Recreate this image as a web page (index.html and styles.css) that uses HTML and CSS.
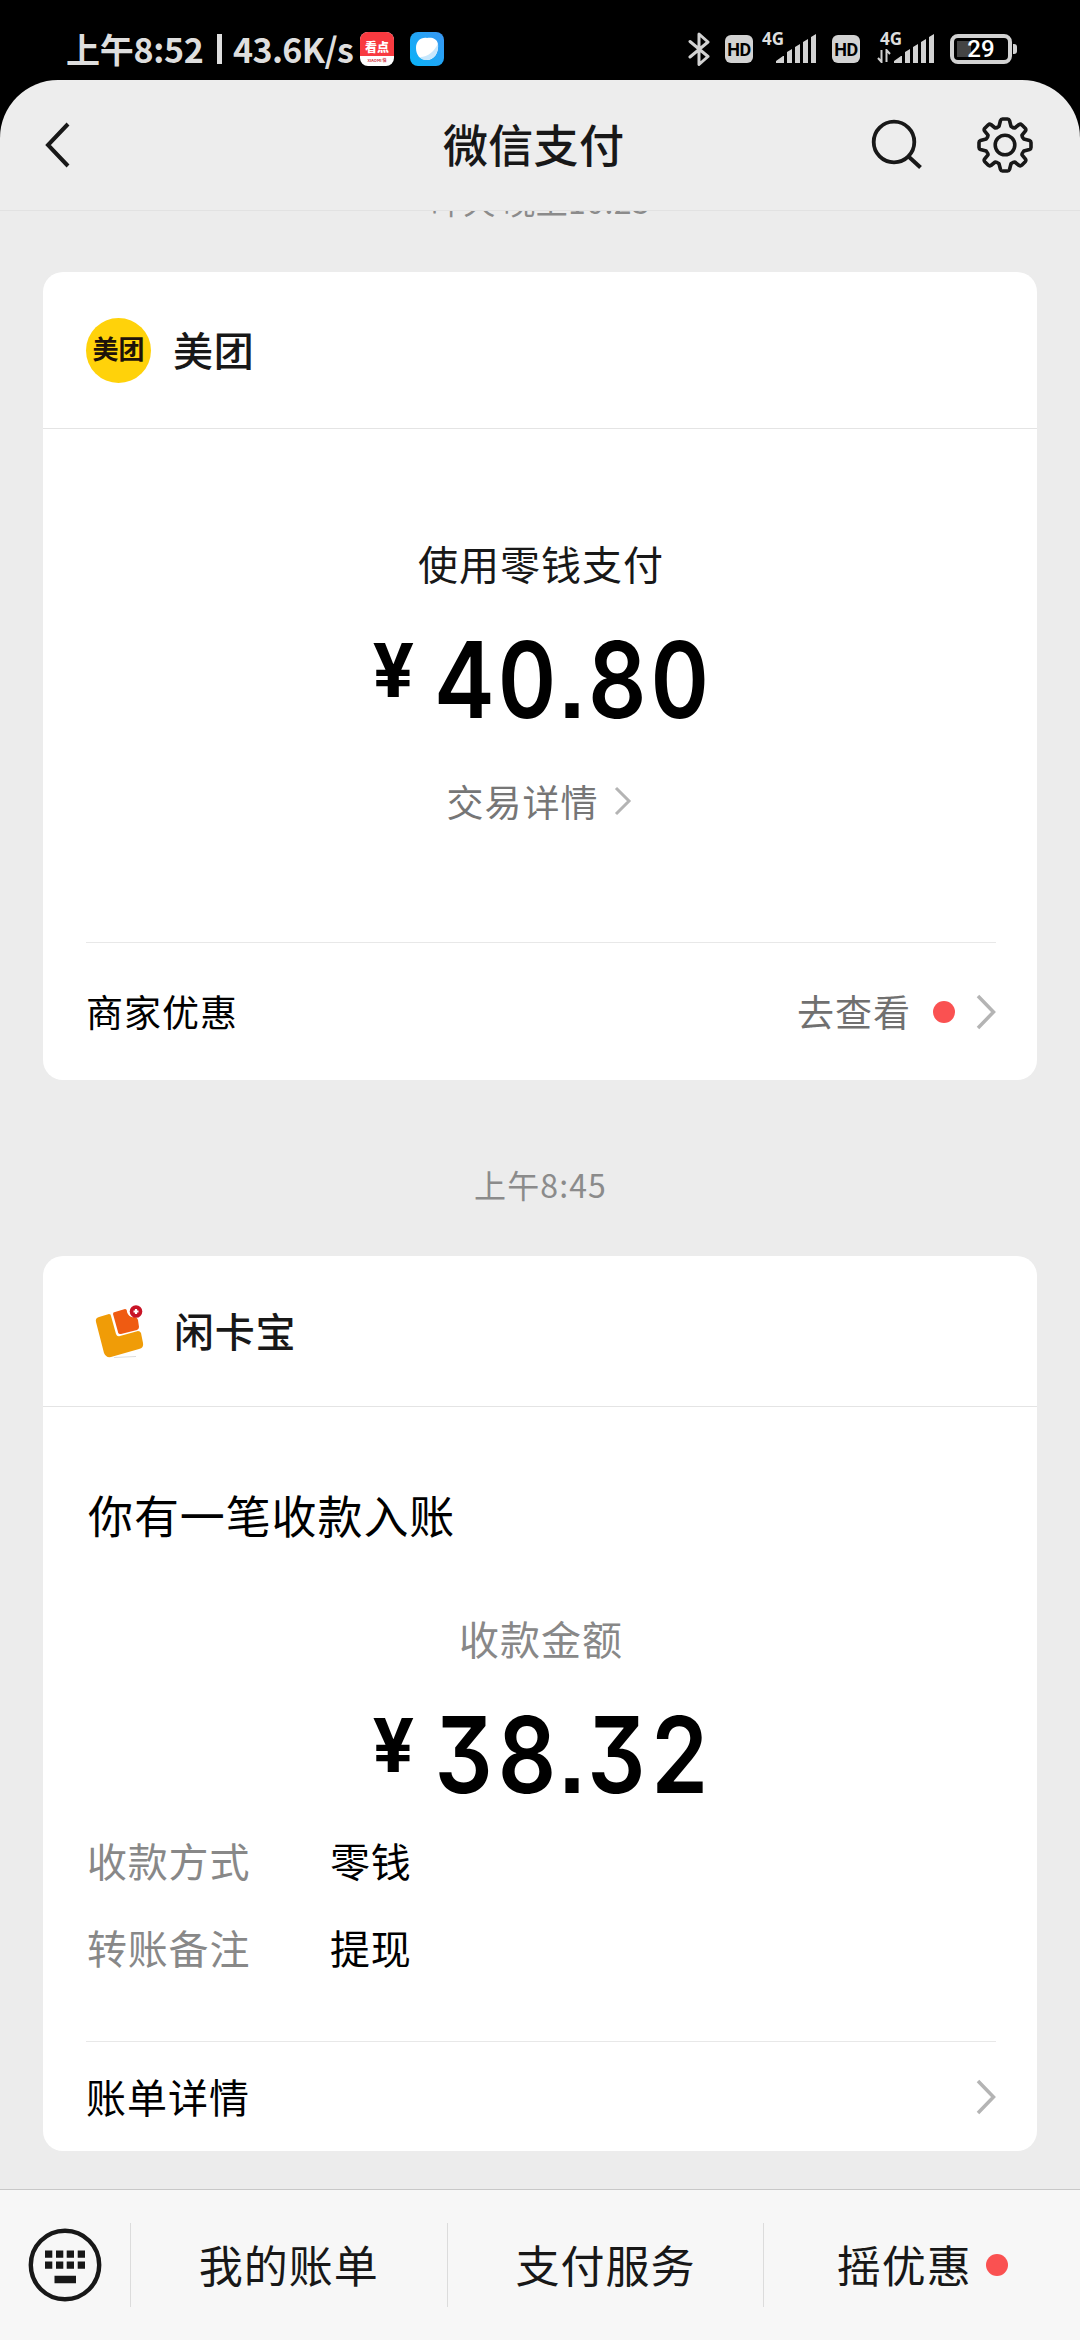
FILE: index.html
```html
<!DOCTYPE html>
<html lang="zh-CN">
<head>
<meta charset="utf-8">
<title>微信支付</title>
<link rel="stylesheet" href="styles.css">
</head>
<body>
<div class="status">
  <span class="clock">上午8:52</span><span class="rule"></span><span class="speed">43.6K/s</span>
  <span class="app-red"><b>看点</b><i>XIAOMI 快</i></span>
  <svg class="app-blue" viewBox="0 0 34 34"><defs><linearGradient id="sky" x1="0" x2="1" y1="1" y2="0"><stop offset="0" stop-color="#08b4f8"/><stop offset="1" stop-color="#3a96f2"/></linearGradient></defs><rect width="34" height="34" rx="8" fill="url(#sky)"/><path d="M6 16C6 9 11 5 17 6c4-1 10 0 11 6 1 9-4 16-11 16S6 23 6 16z" fill="#fff"/><path d="M28 11c1 10-4 17-12 17-3 0-5-1-6-3 8 0 15-6 18-14z" fill="#c8e7fc"/></svg>
  <span class="grow"></span>
  <svg class="bt" viewBox="0 0 22 34"><path d="M2 9.500l18 15-9 8V2l9 8L2 25" fill="none" stroke="#d2d2d2" stroke-width="3" stroke-linejoin="round" stroke-linecap="round"/></svg>
  <span class="hd">HD</span>
  <span class="net"><em>4G</em><svg viewBox="0 0 40 29"><path d="M0 29v-2l7-5h1v7zM11 29V18l5-3v14zM19 29V13l5-3v19zM27 29V8l5-3v24zM35 29V3l5-3v29z" fill="#d2d2d2"/></svg></span>
  <span class="hd hd2">HD</span>
  <span class="net net2"><em>4G</em><svg class="updown" viewBox="0 0 14 14"><path d="M4.500 1v12L1 9M9.500 13V1l3.500 4" fill="none" stroke="#d2d2d2" stroke-width="2"/></svg><svg viewBox="0 0 40 29"><path d="M0 29v-2l7-5h1v7zM11 29V18l5-3v14zM19 29V13l5-3v19zM27 29V8l5-3v24zM35 29V3l5-3v29z" fill="#d2d2d2"/></svg></span>
  <span class="battery">29</span><span class="nub"></span>
</div>
<header class="nav">
  <svg class="back" viewBox="0 0 28 48"><path d="M24 3L4 24l20 21" fill="none" stroke="#181818" stroke-width="4"/></svg>
  <h1>微信支付</h1>
  <svg class="search" viewBox="0 0 54 54"><circle cx="24" cy="24" r="20.300" fill="none" stroke="#181818" stroke-width="3.800"/><path d="M38.500 38.500L50.500 49.500" stroke="#181818" stroke-width="4"/></svg>
  <svg class="gear" viewBox="-29 -29 58 58"><g fill="none" stroke="#181818" stroke-width="3.600" stroke-linejoin="round"><circle r="9.800"/><path d="M-4.500-24.500Q-4-26 -2.500-26H2.500Q4-26 4.500-24.500L6-18.800Q9-16.500 9.800-17L14.100-20.500Q15.500-21.300 16.700-20.200L20.200-16.700Q21.300-15.500 20.500-14.100L17-9.800Q16.500-9 18.800-6L24.500-4.500Q26-4 26-2.500V2.500Q26 4 24.500 4.500L18.800 6Q16.500 9 17 9.800L20.500 14.100Q21.300 15.500 20.200 16.700L16.700 20.200Q15.500 21.300 14.100 20.500L9.800 17Q9 16.500 6 18.800L4.500 24.500Q4 26 2.500 26H-2.500Q-4 26-4.500 24.500L-6 18.800Q-9 16.500-9.800 17L-14.100 20.500Q-15.500 21.300-16.700 20.200L-20.200 16.700Q-21.300 15.500-20.500 14.100L-17 9.800Q-16.500 9-18.800 6L-24.500 4.500Q-26 4-26 2.500V-2.500Q-26-4-24.500-4.500L-18.800-6Q-16.500-9-17-9.800L-20.500-14.100Q-21.300-15.500-20.200-16.700L-16.700-20.200Q-15.500-21.300-14.100-20.500L-9.800-17Q-9-16.500-6-18.800Z"/></g></svg>
</header>
<main class="chat">
  <p class="time time-cut">昨天 晚上10:23</p>
  <section class="card card-pay">
    <div class="card-head"><span class="meituan">美团</span><h2>美团</h2></div>
    <div class="card-body">
      <p class="caption">使用零钱支付</p>
      <p class="amount"><span class="yen">¥</span><span class="num">40.80</span></p>
      <p class="link">交易详情<svg viewBox="0 0 18 30"><path d="M2 2l13 13L2 28" fill="none" stroke="#b4b4b4" stroke-width="3"/></svg></p>
    </div>
    <div class="card-foot"><span>商家优惠</span><span class="grow"></span><span class="go">去查看</span><i class="dot"></i><svg class="chev" viewBox="0 0 20 36"><path d="M2 2l15.500 16L2 34" fill="none" stroke="#b4b4b4" stroke-width="3.500"/></svg></div>
  </section>
  <p class="time">上午8:45</p>
  <section class="card card-in">
    <div class="card-head"><svg class="wallet" viewBox="0 0 50 54"><path d="M2 18q-1-4 3-5l10-3q2 0 2 2l5 18q1 3 4 2l18-5q2 0 3 2l2 10q1 5-4 6l-28 8q-5 1-7-4z" fill="#f09c07"/><path d="M19 10q0-2 2-2l10-3q2 0 2 3 2 6 7 5 3 0 4 3l1 7q0 2-2 3l-16 4q-3 0-3-2z" fill="#ef5b12"/><circle cx="42" cy="7.500" r="6.300" fill="#c81426"/><path d="M42 5v5M39.500 7.500h5" stroke="#fff" stroke-width="2.200"/><path d="M20 53.500l22-1" stroke="#ddd"/></svg><h2>闲卡宝</h2></div>
    <h3>你有一笔收款入账</h3>
    <p class="caption muted">收款金额</p>
    <p class="amount"><span class="yen">¥</span><span class="num">38.32</span></p>
    <dl><dt>收款方式</dt><dd>零钱</dd><dt>转账备注</dt><dd>提现</dd></dl>
    <div class="card-foot"><span>账单详情</span><span class="grow"></span><svg class="chev" viewBox="0 0 20 36"><path d="M2 2l15.500 16L2 34" fill="none" stroke="#b4b4b4" stroke-width="3.500"/></svg></div>
  </section>
</main>
<footer class="menu">
  <div class="keys"><svg viewBox="0 0 74 74"><circle cx="37" cy="37" r="34.200" fill="none" stroke="#181818" stroke-width="4.400"/><path d="M17 22.500h7.300v7.300H17zM28 22.500h7.300v7.300H28zM38.700 22.500H46v7.300h-7.300zM49.700 22.500H57v7.300h-7.300zM17 33.500h7.300v7.300H17zM28 33.500h7.300v7.300H28zM38.700 33.500H46v7.300h-7.300zM49.700 33.500H57v7.300h-7.300zM26.500 47.800H48v7.500H26.500z" fill="#181818"/></svg></div>
  <span class="tab"><b>我的账单</b></span><span class="tab"><b>支付服务</b></span><span class="tab"><b>摇优惠</b><i class="dot"></i></span>
</footer>
</body>
</html>
```
FILE: styles.css
```css
* { box-sizing: border-box; margin: 0; padding: 0; }
body {
  width: 1080px; height: 2340px; overflow: hidden;
  display: flex; flex-direction: column;
  background: #000; color: #000;
  font-family: "Noto Sans CJK SC", "Noto Sans", sans-serif;
}
i, em { font-style: normal; }
svg { display: block; flex: none; }
.grow { flex: 1; }

.status {
  height: 80px; flex: none; display: flex; align-items: center;
  padding: 18px 63px 0 66px; color: #dedede;
  font-size: 34px; font-weight: 700; line-height: 40px; white-space: nowrap;
}
.clock, .speed { padding-bottom: 1px; }
.clock { width: 151px; letter-spacing: -.3px; }
.rule { width: 5px; height: 30px; background: #dedede; margin-right: 11px; }
.speed { width: 127px; letter-spacing: -.6px; }
.app-red {
  width: 34px; height: 34px; border-radius: 8px; overflow: hidden;
  display: flex; flex-direction: column; background: #fff;
  text-align: center; color: #fff;
}
.app-red b { height: 24px; background: #f83a40; font-size: 12px; line-height: 29px; }
.app-red i { color: #d03040; font-size: 4px; line-height: 9px; }
.app-blue { width: 34px; height: 34px; margin-left: 16px; }
.bt { width: 22px; height: 34px; }
.hd {
  width: 28px; height: 28px; border-radius: 6px; margin-left: 15px;
  background: #d2d2d2; color: #000; text-align: center;
  font: 700 18px/30px Roboto, sans-serif; letter-spacing: -.5px;
}
.net { width: 54px; height: 34px; margin-left: 9px; position: relative; display: flex; align-items: flex-end; justify-content: flex-end; padding-bottom: 3px; }
.net svg { width: 40px; height: 29px; }
.net em { position: absolute; left: 0; top: -2px; font: 700 17px/17px "Noto Sans", sans-serif; }
.hd2 { margin-left: 16px; }
.net2 { width: 58px; margin-left: 16px; }
.net2 em { left: 4px; }
.net2 .updown { width: 14px; height: 14px; margin-right: 3px; }
.battery {
  width: 62px; height: 30px; margin-left: 16px; border: 4px solid #d2d2d2; border-radius: 8px;
  background: linear-gradient(#444, #444) 3px 3px / 14px 16px no-repeat;
  font: 500 24px/23px Roboto, sans-serif; text-align: center; color: #fff;
}
.nub { width: 4px; height: 10px; margin-left: 1px; background: #d2d2d2; border-radius: 0 3px 3px 0; }

.nav {
  height: 131px; flex: none; display: flex; align-items: center;
  background: #ededed; border-bottom: 1px solid #e2e2e2;
  border-radius: 58px 58px 0 0; padding-left: 44px;
}
.back { width: 28px; height: 48px; }
.nav h1 { margin-left: 371px; width: 427px; font-size: 45px; font-weight: 500; line-height: 60px; letter-spacing: .3px; color: #181818; padding-bottom: 2px; }
.search { width: 54px; height: 54px; }
.gear { width: 58px; height: 58px; margin-left: 52px; }

.chat { flex: 1; overflow: hidden; background: #ececec; padding: 0 43px; }
.time { text-align: center; color: #8b8b8b; font-size: 32px; line-height: 40px; letter-spacing: 1.1px; margin: 84px 0 52px; padding-left: 1px; }
.time-cut { margin: -31px 0 52px; letter-spacing: .4px; }
.card { background: #fff; border-radius: 20px; display: flex; flex-direction: column; }
.card-pay { height: 808px; }
.card-in { height: 895px; }
.card-head { height: 157px; flex: none; border-bottom: 1px solid #e4e4e4; padding-left: 43px; display: flex; align-items: center; }
.card-in .card-head { height: 151px; }
.card-head h2 { font-size: 40px; font-weight: 500; letter-spacing: .8px; line-height: 56px; color: #181818; padding-bottom: 3px; }
.meituan {
  width: 65px; height: 65px; border-radius: 50%; background: #ffd20a; color: #1e1209;
  margin-right: 22px; font-size: 26px; font-weight: 700; line-height: 60px; text-align: center; white-space: nowrap;
}
.wallet { width: 50px; height: 54px; margin: 0 30px 0 8px; }
.card-body { flex: 1; }
.caption { text-align: center; font-size: 40px; line-height: 56px; letter-spacing: 1px; color: #181818; padding-left: 2px; }
.card-body .caption { margin-top: 106px; }
.amount { display: flex; height: 100px; margin-top: 38px; padding-left: 330px; }
.yen { width: 62px; padding-top: 4px; font: 700 76px/76px Roboto, sans-serif; }
.num {
  width: 320px; font: 600 106px/108px Inter, sans-serif; font-feature-settings: "cv09", "tnum", "ss07";
  margin-top: -3px; letter-spacing: 4px; transform: scaleX(.86); transform-origin: 0 0;
}
.link { display: flex; justify-content: center; align-items: center; font-size: 37px; line-height: 50px; letter-spacing: 1px; color: #767676; margin-top: 47px; }
.link svg { width: 18px; height: 30px; margin: 0 2px 0 15px; }
.card-foot { height: 138px; flex: none; margin: 0 41px 0 43px; border-top: 1px solid #e8e8e8; display: flex; align-items: center; font-size: 37px; letter-spacing: 1px; }
.card-foot > span { padding-bottom: 1px; }
.go { color: #707070; }
.dot { width: 22px; height: 22px; border-radius: 50%; background: #fa5151; }
.card-foot .dot { margin: 0 21px 0 22px; }
.chev { width: 20px; height: 36px; }

.card-in h3 { font-size: 45px; font-weight: 400; line-height: 60px; letter-spacing: .9px; margin: 78px 0 0 45px; }
.card-in .muted { color: #888; margin-top: 65px; }
.card-in dl { display: grid; grid-template-columns: 243px 1fr; margin: 13px 0 0 44px; font-size: 40px; line-height: 87px; letter-spacing: .8px; flex: 1; align-content: start; }
.card-in dt { color: #888; }
.card-in .card-foot { height: 110px; font-size: 40px; }

.menu { height: 151px; flex: none; display: flex; align-items: center; background: #f7f7f7; border-top: 1px solid #c8c8c8; font-size: 44px; letter-spacing: 1px; color: #181818; }
.keys { width: 130px; padding-left: 28px; }
.keys svg { width: 74px; height: 74px; }
.tab { flex: 1; height: 84px; border-left: 1px solid #dcdcdc; display: flex; align-items: center; justify-content: center; }
.tab b { font-weight: 400; padding-bottom: 2px; }
.tab .dot { margin-left: 14px; }
```
